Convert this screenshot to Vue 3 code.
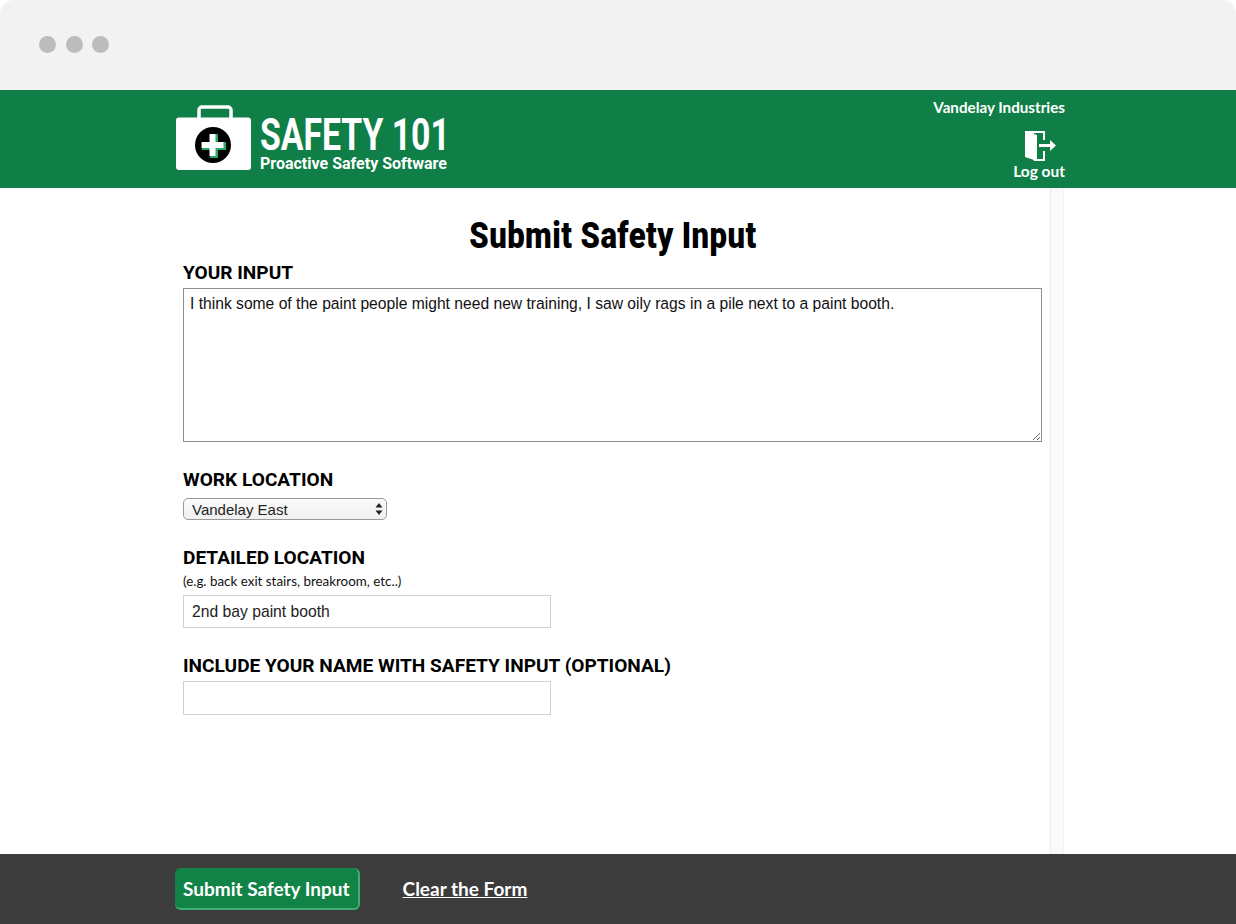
<template>
  <div class="window">
    <div class="titlebar">
      <span class="dot"></span>
      <span class="dot"></span>
      <span class="dot"></span>
    </div>

    <header class="topbar">
      <div class="logo">
        <svg class="case" width="76" height="66" viewBox="0 0 76 66">
          <path d="M23 16V6a3 3 0 0 1 3-3h26a3 3 0 0 1 3 3v10" fill="none" stroke="#fff" stroke-width="3.500" />
          <rect x="0" y="13.500" width="75" height="52.500" rx="3" fill="#fff" />
          <circle cx="37" cy="41" r="18" fill="#000" />
          <path d="M33 29h8v8h8v8h-8v8h-8v-8h-8v-8h8z" fill="#27a866" transform="translate(1 1)" />
          <path d="M33.500 30h6v8h8v6h-8v8h-6v-8h-8v-6h8z" fill="#fff" />
        </svg>
        <div class="brand">
          <div class="brand-name"><span>SAFETY 101</span></div>
          <div class="brand-sub">Proactive Safety Software</div>
        </div>
      </div>
      <div class="account">
        <div class="company">Vandelay Industries</div>
        <a class="logout">
          <svg width="32" height="32" viewBox="0 0 32 32">
            <path d="M1 1h20v9h-2V3h-9v26h9v-8h2v10H10v-0z" fill="#fff" />
            <path d="M1 1l12 4v26L1 27z" fill="#fff" />
            <path d="M15 14h11v-4l6 5.500-6 5.500v-4H15z" fill="#fff" />
          </svg>
          <span>Log out</span>
        </a>
      </div>
    </header>

    <main class="body">
      <form class="form" @submit.prevent>
        <h1><span>Submit Safety Input</span></h1>

        <label class="field-label first">Your Input</label>
        <textarea class="input-area" v-model="form.input"></textarea>

        <label class="field-label work">Work Location</label>
        <div class="select-wrap">
          <select v-model="form.location">
            <option v-for="loc in locations" :key="loc">{{ loc }}</option>
          </select>
          <svg class="arrows" width="8" height="12" viewBox="0 0 8 12">
            <path d="M4 0l3.500 4.500h-7zM4 12L.5 7.500h7z" fill="#222" />
          </svg>
        </div>

        <label class="field-label detail">Detailed Location</label>
        <div class="hint">(e.g. back exit stairs, breakroom, etc..)</div>
        <input class="text-input" type="text" v-model="form.detail" />

        <label class="field-label name">Include your name with safety input (optional)</label>
        <input class="text-input name-input" type="text" v-model="form.name" />
      </form>
      <div class="scroll-track"></div>
    </main>

    <footer class="bottombar">
      <button class="submit" type="button">Submit Safety Input</button>
      <a class="clear" href="#" @click.prevent="clearForm">Clear the Form</a>
    </footer>
  </div>
</template>

<script setup>
import { reactive } from 'vue';

const locations = ['Vandelay East', 'Vandelay West'];

const form = reactive({
  input: 'I think some of the paint people might need new training, I saw oily rags in a pile next to a paint booth.',
  location: 'Vandelay East',
  detail: '2nd bay paint booth',
  name: ''
});

const clearForm = () => {
  form.input = '';
  form.detail = '';
  form.name = '';
};
</script>

<style>
html, body {
  margin: 0;
  background: #fff;
}
</style>

<style scoped>
.window {
  display: flex;
  flex-direction: column;
  width: 1236px;
  height: 924px;
  overflow: hidden;
  background: #fff;
  font-family: Lato, sans-serif;
}

.titlebar {
  display: flex;
  align-items: center;
  gap: 9.500px;
  height: 90px;
  padding: 0 0 2px 39px;
  box-sizing: border-box;
  background: #f2f2f2;
  border-radius: 14px 14px 0 0;
}

.dot {
  width: 17px;
  height: 17px;
  border-radius: 50%;
  background: #bcbcbc;
}

.topbar {
  display: flex;
  justify-content: space-between;
  height: 98px;
  padding: 0 171px 0 176px;
  background: #107f47;
  color: #fff;
}

.logo {
  display: flex;
  align-items: flex-start;
  gap: 8px;
  padding-top: 14px;
}

.brand {
  width: 190px;
  padding-top: 11px;
}

.brand-name {
  font-family: Roboto, sans-serif;
  font-weight: 700;
  font-size: 45px;
  line-height: 40px;
  white-space: nowrap;
}

.brand-name span {
  display: inline-block;
  transform: scaleX(.75);
  transform-origin: left center;
}

.brand-sub {
  font-family: Roboto, sans-serif;
  font-weight: 700;
  font-size: 16px;
  line-height: 18px;
  white-space: nowrap;
}

.account {
  display: flex;
  flex-direction: column;
  align-items: flex-end;
  padding-top: 7px;
  font-weight: 700;
  font-size: 15.200px;
}

.company {
  line-height: 20px;
}

.logout {
  display: flex;
  flex-direction: column;
  align-items: center;
  margin-top: 13px;
  font-size: 15.500px;
  line-height: 20px;
}

.logout svg {
  margin-left: 2px;
  margin-bottom: -1px;
}

.body {
  display: flex;
  flex: 1;
  padding-left: 183px;
}

.form {
  display: flex;
  flex-direction: column;
  align-items: flex-start;
  width: 859px;
}

h1 {
  align-self: stretch;
  margin: 27px 0 0;
  text-align: center;
  font-family: Roboto, sans-serif;
  font-weight: 900;
  font-size: 37px;
  line-height: 42px;
  letter-spacing: .5px;
  color: #000;
}

h1 span {
  display: inline-block;
  transform: scaleX(.84);
}

.field-label {
  font-family: Roboto, sans-serif;
  font-weight: 700;
  font-size: 19.100px;
  line-height: 22px;
  text-transform: uppercase;
  color: #000;
}

.first {
  margin-top: 5px;
}

.input-area {
  width: 859px;
  height: 154px;
  margin-top: 4px;
  padding: 6px;
  box-sizing: border-box;
  border: 1px solid #8e8e8e;
  background: #fff;
  font-family: "Liberation Sans", sans-serif;
  font-size: 15.650px;
  line-height: 18px;
  color: #111;
  outline: none;
}

.work {
  margin-top: 27px;
}

.select-wrap {
  position: relative;
  margin-top: 7px;
}

select {
  display: block;
  width: 204px;
  height: 22px;
  padding: 0 20px 0 8px;
  box-sizing: border-box;
  appearance: none;
  border: 1px solid #9a9a9a;
  border-radius: 5px;
  background: linear-gradient(#fbfbfb, #f0f0f0);
  font-family: "Liberation Sans", sans-serif;
  font-size: 15px;
  color: #222;
}

.arrows {
  position: absolute;
  top: 5px;
  right: 4px;
  pointer-events: none;
}

.detail {
  margin-top: 27px;
}

.hint {
  margin-top: 4px;
  font-size: 13.400px;
  line-height: 16px;
  color: #111;
}

.text-input {
  width: 368px;
  height: 33px;
  margin-top: 6px;
  padding: 0 8px;
  box-sizing: border-box;
  border: 1px solid #d0d0d0;
  background: #fff;
  font-family: "Liberation Sans", sans-serif;
  font-size: 15.700px;
  color: #222;
  outline: none;
}

.name {
  margin-top: 27px;
}

.name-input {
  height: 34px;
  margin-top: 4px;
}

.scroll-track {
  width: 12px;
  margin-left: 8px;
  background: #fafafa;
  border-left: 1px solid #ebebeb;
  border-right: 1px solid #f3f3f3;
}

.bottombar {
  display: flex;
  align-items: center;
  gap: 43px;
  height: 70px;
  padding-left: 175px;
  background: #3c3c3c;
}

.submit {
  height: 42px;
  padding: 0 8px;
  border: none;
  border-right: 2px solid #3fae74;
  border-bottom: 2px solid #3fae74;
  border-radius: 6px;
  background: #128347;
  color: #fff;
  font-family: Lato, sans-serif;
  font-weight: 700;
  font-size: 19px;
}

.clear {
  margin-bottom: 2px;
  color: #fff;
  font-weight: 700;
  font-size: 19px;
  text-decoration: underline;
}
</style>
